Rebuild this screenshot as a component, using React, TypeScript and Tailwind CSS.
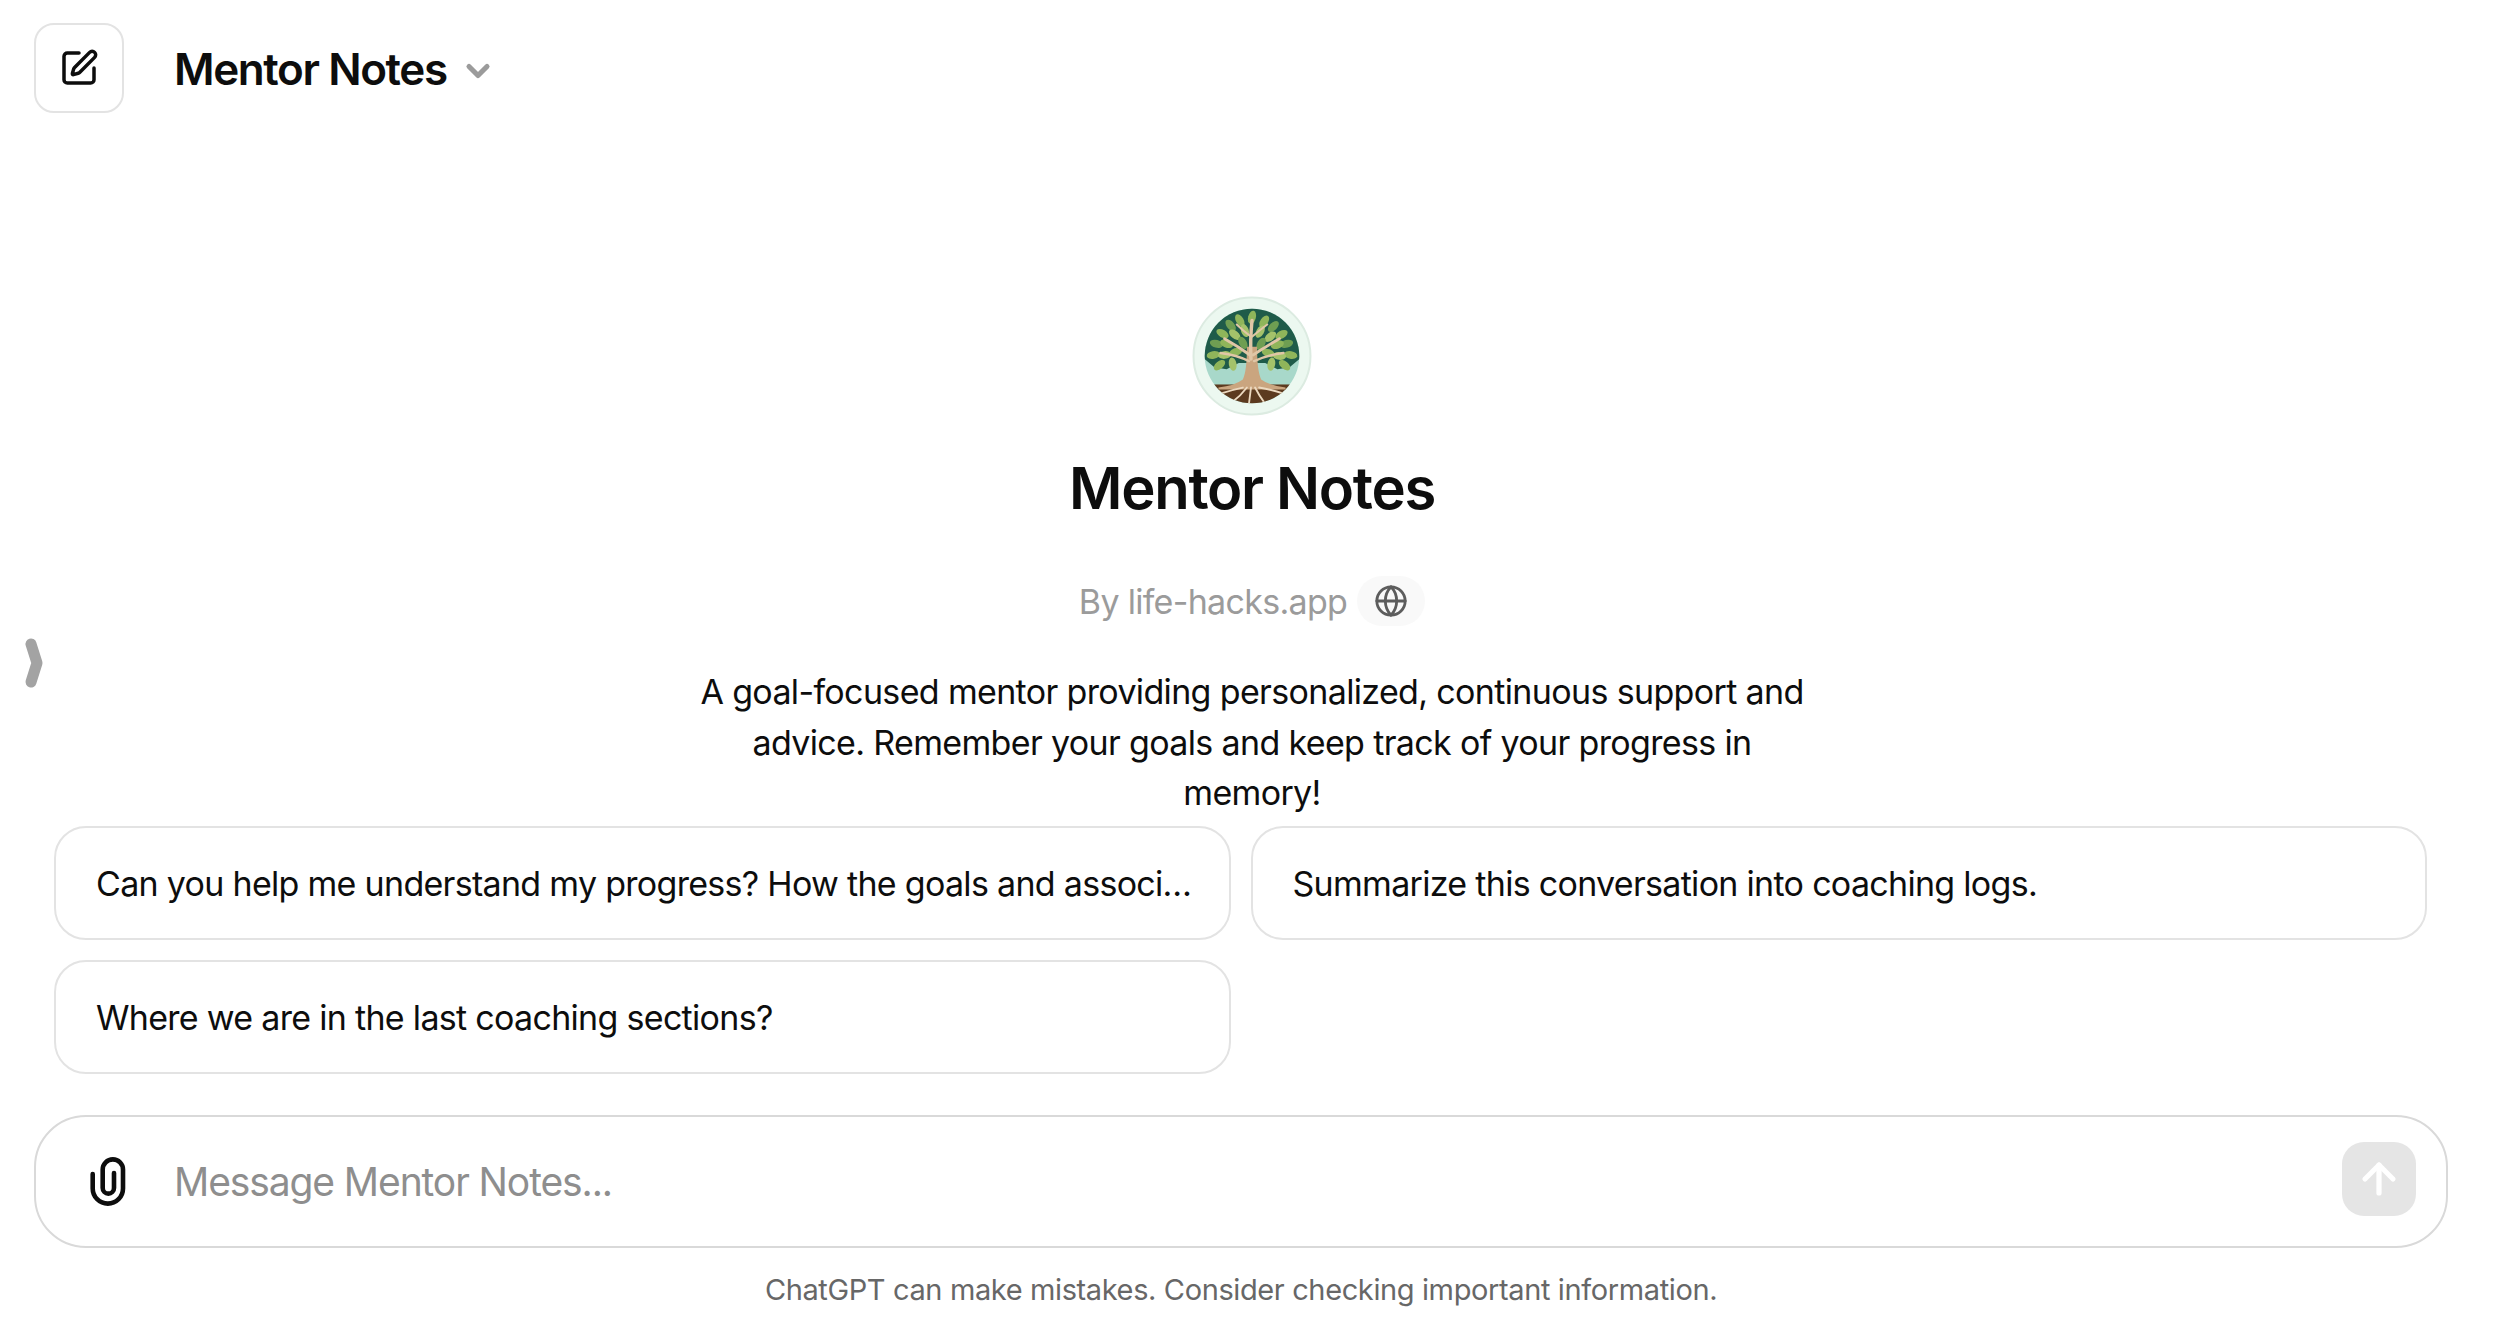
import { ArrowUp, ChevronDown, Globe, SquarePen } from "lucide-react"

const font = { fontFamily: "Inter, 'Liberation Sans', sans-serif" }

const prompts = [
  "Can you help me understand my progress? How the goals and associated tasks are going?",
  "Summarize this conversation into coaching logs.",
  "Where we are in the last coaching sections?",
]

// leaf positions for the tree logo: x, y, rotation, colour
const leaves: [number, number, number, string][] = [
  [59, 21, 15, "#8fb55a"], [47, 24, -30, "#8fb55a"], [71, 25, 35, "#8fb55a"], [38, 29, -40, "#6f9e52"],
  [80, 30, 45, "#6f9e52"], [52, 34, -20, "#a4c26a"], [67, 35, 30, "#a4c26a"], [30, 37, -60, "#8fb55a"],
  [88, 38, 60, "#8fb55a"], [42, 38, -50, "#a4c26a"], [77, 40, 50, "#a4c26a"], [24, 47, -75, "#6f9e52"],
  [93, 47, 75, "#6f9e52"], [34, 47, -70, "#8fb55a"], [84, 48, 70, "#8fb55a"], [21, 58, -100, "#8fb55a"],
  [97, 58, 100, "#8fb55a"], [32, 58, -95, "#a4c26a"], [86, 59, 95, "#a4c26a"], [43, 55, -110, "#8fb55a"],
  [75, 56, 110, "#8fb55a"], [27, 68, -130, "#8fb55a"], [91, 68, 130, "#8fb55a"], [40, 67, 170, "#a4c26a"],
  [78, 67, 190, "#a4c26a"], [50, 46, -30, "#6f9e52"], [68, 47, 30, "#6f9e52"],
]

function TreeLogo() {
  return (
    <svg width="120" height="120" viewBox="0 0 118 118">
      <defs>
        <clipPath id="inner">
          <circle cx="59" cy="59" r="46.5" />
        </clipPath>
      </defs>
      <circle cx="59" cy="59" r="57.5" fill="#ecf8f0" stroke="#dcebe1" strokeWidth="2" />
      <g clipPath="url(#inner)">
        <rect x="0" y="0" width="118" height="118" fill="#a8d8ca" />
        <path d="M10 60 Q12 10 59 10 Q106 10 108 60 L96 70 L84 72 L72 66 L46 66 L34 72 L22 70 Z" fill="#1f5b49" />
        <rect x="0" y="87" width="118" height="31" fill="#5c3a1f" />
        {leaves.map(([x, y, r, c], i) => (
          <ellipse key={i} cx={x} cy={y} rx="3.8" ry="6.6" fill={c} transform={`rotate(${r} ${x} ${y})`} />
        ))}
        <path d="M54 50 L64 50 Q64 74 68 82 Q76 88 92 90 L92 92 L26 92 L26 90 Q42 88 50 82 Q54 74 54 50 Z" fill="#caa57f" />
        <g fill="none" stroke="#e0c6a6" strokeLinecap="round">
          <path d="M58 62 Q57 44 59 24" strokeWidth="3.4" />
          <path d="M57 58 Q46 50 32 42" strokeWidth="2.8" />
          <path d="M60 58 Q72 50 86 42" strokeWidth="2.8" />
          <path d="M56 64 Q44 58 28 56" strokeWidth="2.4" />
          <path d="M61 64 Q74 58 90 56" strokeWidth="2.4" />
          <path d="M58 40 Q50 34 44 28" strokeWidth="2" />
          <path d="M59 40 Q66 34 74 28" strokeWidth="2" />
        </g>
        <g fill="none" stroke="#ecd9c0" strokeWidth="1.8" strokeLinecap="round">
          <path d="M50 90 Q40 92 28 96" />
          <path d="M54 90 Q48 98 40 104" />
          <path d="M58 90 L56 106" />
          <path d="M62 90 Q66 98 72 106" />
          <path d="M66 90 Q78 92 90 96" />
        </g>
      </g>
    </svg>
  )
}

function PaperClip() {
  return (
    <svg width="36" height="49" viewBox="0 0 36 49" fill="none" stroke="#0d0d0d" strokeWidth="4.6" strokeLinecap="round">
      <path d="M2.7 17 V31.5 A15.15 15.15 0 0 0 33 31.5 V12.5 A10.15 10.15 0 0 0 12.7 12.5 V31 A5.65 5.65 0 0 0 24 31 V16" />
    </svg>
  )
}

export default function App() {
  return (
    <div className="relative flex h-[1326px] w-[2504px] flex-col overflow-hidden bg-white text-[#0d0d0d]" style={font}>
      <header className="flex h-[135px] shrink-0 items-start pl-[34px] pt-[23px]">
        <button className="flex h-[90px] w-[90px] items-center justify-center rounded-[20px] border-2 border-[#e3e3e3]">
          <SquarePen size={40} strokeWidth={2.1} />
        </button>
        <div className="ml-[50px] flex h-[92px] items-center">
          <span className="text-[44px] font-semibold tracking-[-1.4px]">Mentor Notes</span>
          <ChevronDown size={36} strokeWidth={3.4} className="ml-[13px] mt-[3px] text-[#9b9b9b]" />
        </div>
      </header>

      <button className="absolute left-[24px] top-[636px]">
        <svg width="24" height="54" viewBox="0 0 24 54" fill="none" stroke="#a3a3a3" strokeWidth="11" strokeLinecap="round" strokeLinejoin="round">
          <path d="M7 8 L13 27 L7 46" />
        </svg>
      </button>

      <section className="flex flex-col items-center pt-[161px]">
        <TreeLogo />
        <h1 className="mt-[37px] text-[58px] font-semibold leading-[70px] tracking-[-1.3px]">Mentor Notes</h1>
        <div className="mt-[53px] flex h-[50px] items-center">
          <span className="text-[34px] tracking-[-0.7px] text-[#9b9b9b]">By life-hacks.app</span>
          <span className="ml-[10px] flex h-[50px] w-[68px] items-center justify-center rounded-full bg-[#f9f9f9]">
            <Globe size={34} strokeWidth={2} className="text-[#5d5d5d]" />
          </span>
        </div>
        <p className="mt-[41px] w-[1130px] text-center text-[34px] leading-[50.5px] tracking-[-0.65px] text-[#0d0d0d]">
          A goal-focused mentor providing personalized, continuous support and advice. Remember your goals and keep track of your progress in memory!
        </p>
      </section>

      <section className="ml-[54px] mt-[7px] grid w-[2373px] grid-cols-2 gap-[20px] self-start">
        {prompts.map((p) => (
          <button
            key={p}
            className="flex h-[114px] items-center rounded-[32px] border-2 border-[#e3e3e3] pl-[40px] pr-[36px] pt-[2px] text-left text-[34px] tracking-[-0.7px]"
          >
            <span className="truncate">{p}</span>
          </button>
        ))}
      </section>

      <div className="ml-[34px] mt-[41px] flex h-[133px] w-[2414px] items-center rounded-[52px] border-2 border-[#d9d9d9] pl-[54px] pr-[30px]">
        <PaperClip />
        <span className="ml-[48px] flex-1 pt-[2px] text-[39px] tracking-[-1.1px] text-[#8e8e8e]">Message Mentor Notes...</span>
        <button className="mb-[4px] flex h-[74px] w-[74px] items-center justify-center rounded-[22px] bg-[#e5e5e5]">
          <ArrowUp size={48} strokeWidth={2.6} className="text-white" />
        </button>
      </div>

      <p className="ml-[34px] mt-[22px] w-[2414px] text-center text-[29px] leading-[40px] tracking-[-0.38px] text-[#676767]">
        ChatGPT can make mistakes. Consider checking important information.
      </p>
    </div>
  )
}
